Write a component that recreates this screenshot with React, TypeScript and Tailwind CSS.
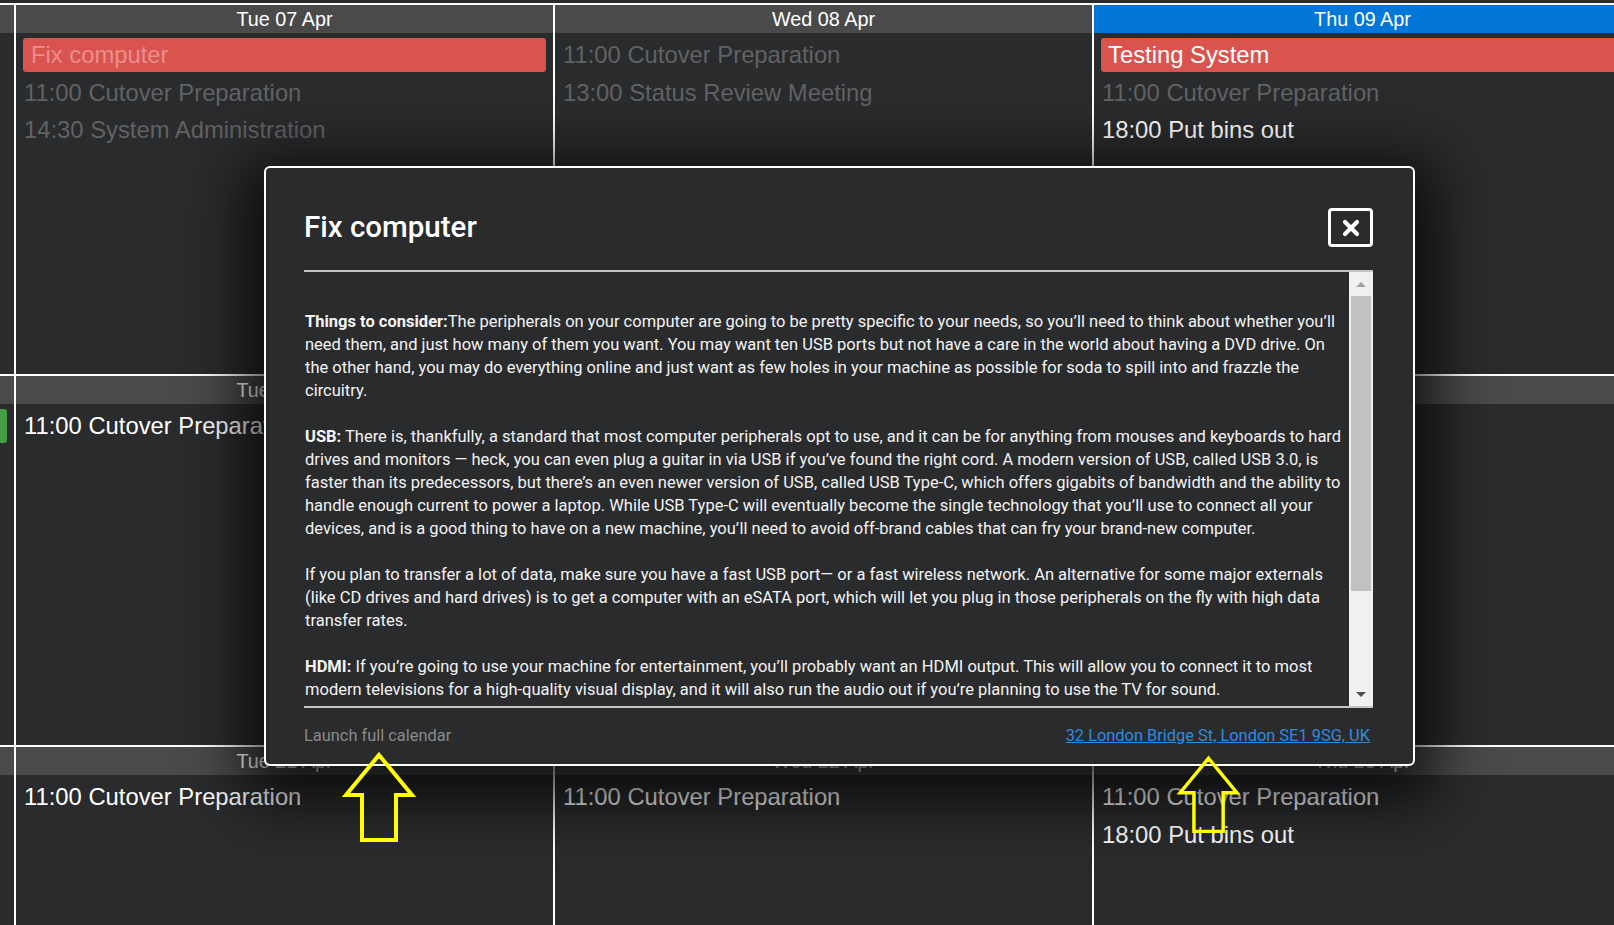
type Kind = "past" | "future" | "pastBar" | "bar" | "green";

interface CalEvent {
  title: string;
  kind: Kind;
}

interface Day {
  label: string;
  today?: boolean;
  events: CalEvent[];
}

const weeks: Day[][] = [
  [
    { label: "Mon 06 Apr", events: [] },
    {
      label: "Tue 07 Apr",
      events: [
        { title: "Fix computer", kind: "pastBar" },
        { title: "11:00 Cutover Preparation", kind: "past" },
        { title: "14:30 System Administration", kind: "past" },
      ],
    },
    {
      label: "Wed 08 Apr",
      events: [
        { title: "11:00 Cutover Preparation", kind: "past" },
        { title: "13:00 Status Review Meeting", kind: "past" },
      ],
    },
    {
      label: "Thu 09 Apr",
      today: true,
      events: [
        { title: "Testing System", kind: "bar" },
        { title: "11:00 Cutover Preparation", kind: "past" },
        { title: "18:00 Put bins out", kind: "future" },
      ],
    },
  ],
  [
    { label: "Mon 13 Apr", events: [{ title: "Release", kind: "green" }] },
    {
      label: "Tue 14 Apr",
      events: [{ title: "11:00 Cutover Preparation", kind: "future" }],
    },
    {
      label: "Wed 15 Apr",
      events: [
        { title: "11:00 Cutover Preparation", kind: "future" },
        { title: "13:00 Status Review Meeting", kind: "future" },
      ],
    },
    {
      label: "Thu 16 Apr",
      events: [
        { title: "11:00 Cutover Preparation", kind: "future" },
        { title: "18:00 Put bins out", kind: "future" },
      ],
    },
  ],
  [
    { label: "Mon 20 Apr", events: [] },
    {
      label: "Tue 21 Apr",
      events: [{ title: "11:00 Cutover Preparation", kind: "future" }],
    },
    {
      label: "Wed 22 Apr",
      events: [{ title: "11:00 Cutover Preparation", kind: "future" }],
    },
    {
      label: "Thu 23 Apr",
      events: [
        { title: "11:00 Cutover Preparation", kind: "future" },
        { title: "18:00 Put bins out", kind: "future" },
      ],
    },
  ],
];

const eventClass: Record<Kind, string> = {
  past: "pl-[1px] text-[#616264]",
  future: "pl-[1px] text-white",
  pastBar: "rounded-[3px] bg-[#d9534f] px-[8px] text-[#eb8e8b]",
  bar: "rounded-[3px] bg-[#d9534f] px-[7px] text-white",
  green: "rounded-[3px] bg-[#449d44] px-[7px] text-white",
};

function DayCell({ day }: { day: Day }) {
  return (
    <div className="w-[537px] shrink-0">
      <div
        className={`h-[28px] text-center text-[19.8px] leading-[29px] text-white ${
          day.today ? "bg-[#0277d7]" : "bg-[#4a4a4a]"
        }`}
      >
        {day.label}
      </div>
      <div className="flex flex-col gap-[3.5px] px-[7px] pt-[5px]">
        {day.events.map((ev, i) => (
          <div
            key={i}
            className={`h-[34px] overflow-hidden whitespace-nowrap text-[23.8px] leading-[34px] ${eventClass[ev.kind]}`}
          >
            {ev.kind === "green" ? "" : ev.title}
          </div>
        ))}
      </div>
    </div>
  );
}

function UpArrow({ className }: { className: string }) {
  return (
    <svg
      className={className}
      width="100"
      height="100"
      viewBox="0 0 100 100"
      xmlns="http://www.w3.org/2000/svg"
    >
      <polygon
        points="39,5 72,45 56,45 56,90 22,90 22,45 6,45"
        fill="none"
        stroke="#ffff00"
        strokeWidth="4"
        strokeLinejoin="miter"
      />
    </svg>
  );
}

function EventModal() {
  return (
    <div className="absolute left-[264px] top-[166px] w-[1151px] rounded-[6px] border-2 border-white bg-[#2a2b2d] pl-[38px] pr-[40px] font-['Roboto',sans-serif] shadow-[0_15px_60px_20px_rgba(0,0,0,0.75)]">
      <div className="flex items-center justify-between border-b-2 border-[#c5c5c5] pb-[23px] pt-[40px]">
        <h2 className="text-[29.5px] font-medium leading-none text-white">
          Fix computer
        </h2>
        <button
          title="Close"
          className="flex h-[39px] w-[45px] items-center justify-center rounded-[4px] border-[3px] border-white"
        >
          <svg
            width="20"
            height="20"
            viewBox="0 0 20 20"
            fill="none"
            xmlns="http://www.w3.org/2000/svg"
          >
            <path
              d="M4 4l12 12M16 4L4 16"
              stroke="white"
              strokeWidth="4.2"
              strokeLinecap="round"
            />
          </svg>
        </button>
      </div>

      <div className="flex h-[436px] border-b-2 border-[#c5c5c5]">
        <div className="flex-1 overflow-hidden pl-[1px] pr-[4px] pt-[38px] text-[16.5px] leading-[23px] text-[#f3f3f3]">
          <p className="mb-[23px]">
            <b>Things to consider:</b>The peripherals on your computer are going
            to be pretty specific to your needs, so you’ll need to think about
            whether you’ll need them, and just how many of them you want. You
            may want ten USB ports but not have a care in the world about having
            a DVD drive. On the other hand, you may do everything online and just
            want as few holes in your machine as possible for soda to spill into
            and frazzle the circuitry.
          </p>
          <p className="mb-[23px]">
            <b>USB:</b> There is, thankfully, a standard that most computer
            peripherals opt to use, and it can be for anything from mouses and
            keyboards to hard drives and monitors — heck, you can even plug a
            guitar in via USB if you’ve found the right cord. A modern version
            of USB, called USB 3.0, is faster than its predecessors, but there’s
            an even newer version of USB, called USB Type-C, which offers
            gigabits of bandwidth and the ability to handle enough current to
            power a laptop. While USB Type-C will eventually become the single
            technology that you’ll use to connect all your devices, and is a
            good thing to have on a new machine, you’ll need to avoid off-brand
            cables that can fry your brand-new computer.
          </p>
          <p className="mb-[23px]">
            If you plan to transfer a lot of data, make sure you have a fast USB
            port— or a fast wireless network. An alternative for some major
            externals (like CD drives and hard drives) is to get a computer with
            an eSATA port, which will let you plug in those peripherals on the
            fly with high data transfer rates.
          </p>
          <p className="mb-[23px]">
            <b>HDMI:</b> If you’re going to use your machine for entertainment,
            you’ll probably want an HDMI output. This will allow you to connect
            it to most modern televisions for a high-quality visual display, and
            it will also run the audio out if you’re planning to use the TV for
            sound.
          </p>
          <p className="mb-[23px]">
            <b>Ethernet:</b> Wi-Fi is great, but a wired connection is still the
            fastest and most reliable way to get online, so make sure there is
            at least one Ethernet port.
          </p>
        </div>

        {/* fake scrollbar */}
        <div className="flex w-[24px] shrink-0 flex-col bg-[#f1f1f1]">
          <div className="flex h-[24px] items-center justify-center">
            <div className="h-0 w-0 border-x-[5px] border-b-[5px] border-x-transparent border-b-[#a3a3a3]" />
          </div>
          <div className="mx-[2px] h-[295px] bg-[#c1c1c1]" />
          <div className="flex-1" />
          <div className="flex h-[24px] items-center justify-center">
            <div className="h-0 w-0 border-x-[5px] border-t-[5px] border-x-transparent border-t-[#505050]" />
          </div>
        </div>
      </div>

      <div className="flex h-[56px] items-center justify-between text-[16.4px]">
        <span className="text-[#8a8a8a]">Launch full calendar</span>
        <a href="#" className="pr-[3px] text-[#2e8ce0] underline">
          32 London Bridge St, London SE1 9SG, UK
        </a>
      </div>
    </div>
  );
}

export default function App() {
  return (
    <div className="relative h-[925px] w-[1614px] overflow-hidden bg-[#2a2b2d] pt-[3px] font-['Liberation_Sans',Arial,sans-serif]">
      {weeks.map((week, w) => (
        <div key={w} className="flex h-[371px] border-t-2 border-white">
          <div className="flex w-[14px] shrink-0 justify-end overflow-hidden">
            <DayCell day={week[0]} />
          </div>
          {week.slice(1).map((day) => (
            <div
              key={day.label}
              className="w-[539px] shrink-0 overflow-hidden border-l-2 border-white"
            >
              <DayCell day={day} />
            </div>
          ))}
        </div>
      ))}

      <EventModal />

      <UpArrow className="absolute left-[340px] top-[750px]" />
      <UpArrow className="absolute left-[1168px] top-[754px] h-[86px]" />
    </div>
  );
}
